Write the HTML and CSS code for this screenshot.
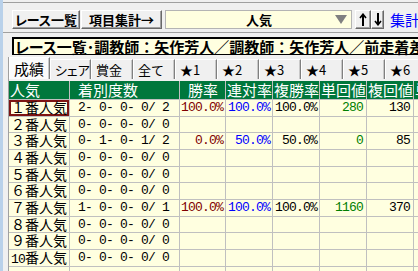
FILE: index.html
```html
<!DOCTYPE html>
<html lang="ja">
<head>
  <meta charset="UTF-8" />
  <title>人気別集計</title>
  <link rel="stylesheet" href="styles.css">
</head>
<body>
  <div class="frame">
    <div class="topstrip"></div>

    <div class="toolbar">
      <button class="btn btn-list"><span class="kana">レース一覧</span></button>
      <button class="btn btn-sum">項目集計→</button>
      <div class="combo">
        <span class="combo-text">人気</span>
        <svg class="caret" width="12" height="9" viewBox="0 0 12 9"><polygon points="0,0 12,0 6,9" fill="#808080"/></svg>
      </div>
      <button class="btn btn-arrow btn-up">
        <svg width="8" height="13" viewBox="0 0 8 13"><line x1="4" y1="1" x2="4" y2="13" stroke="#000" stroke-width="2"/><polyline points="1,5 4,1.2 7,5" fill="none" stroke="#000" stroke-width="1.6"/></svg>
      </button>
      <button class="btn btn-arrow btn-down">
        <svg width="8" height="13" viewBox="0 0 8 13"><line x1="4" y1="0" x2="4" y2="12" stroke="#000" stroke-width="2"/><polyline points="1,8 4,11.8 7,8" fill="none" stroke="#000" stroke-width="1.6"/></svg>
      </button>
      <span class="link">集計条件</span>
    </div>

    <div class="infobar">
      <div class="info"><span class="kana">レース一覧･</span>調教師：矢作芳人／調教師：矢作芳人／前走着差０．５秒以内</div>
    </div>

    <div class="panel">
      <div class="tabs">
        <div class="tab on">成績</div>
        <div class="tab narrow"><span class="kana">シェア</span></div>
        <div class="tab">賞金</div>
        <div class="tab">全て</div>
        <div class="tab">★1</div>
        <div class="tab">★2</div>
        <div class="tab">★3</div>
        <div class="tab">★4</div>
        <div class="tab">★5</div>
        <div class="tab">★6</div>
      </div>

      <div class="grid">
        <div class="h">人気</div>
        <div class="h pad">着別度数</div>
        <div class="h pad">勝率</div>
        <div class="h">連対率</div>
        <div class="h">複勝率</div>
        <div class="h">単回値</div>
        <div class="h">複回値</div>
        <div class="h">単</div>

        <div class="c name focus">１番人気</div>
        <div class="c rec"> 2- 0- 0- 0/ 2</div>
        <div class="c num win">100.0%</div>
        <div class="c num ren">100.0%</div>
        <div class="c num fuku">100.0%</div>
        <div class="c num tan">280</div>
        <div class="c num fk">130</div>
        <div class="c"></div>

        <div class="c name">２番人気</div>
        <div class="c rec"> 0- 0- 0- 0/ 0</div>
        <div class="c"></div><div class="c"></div><div class="c"></div><div class="c"></div><div class="c"></div><div class="c"></div>

        <div class="c name">３番人気</div>
        <div class="c rec"> 0- 1- 0- 1/ 2</div>
        <div class="c num win">0.0%</div>
        <div class="c num ren">50.0%</div>
        <div class="c num fuku">50.0%</div>
        <div class="c num tan">0</div>
        <div class="c num fk">85</div>
        <div class="c"></div>

        <div class="c name">４番人気</div>
        <div class="c rec"> 0- 0- 0- 0/ 0</div>
        <div class="c"></div><div class="c"></div><div class="c"></div><div class="c"></div><div class="c"></div><div class="c"></div>

        <div class="c name">５番人気</div>
        <div class="c rec"> 0- 0- 0- 0/ 0</div>
        <div class="c"></div><div class="c"></div><div class="c"></div><div class="c"></div><div class="c"></div><div class="c"></div>

        <div class="c name">６番人気</div>
        <div class="c rec"> 0- 0- 0- 0/ 0</div>
        <div class="c"></div><div class="c"></div><div class="c"></div><div class="c"></div><div class="c"></div><div class="c"></div>

        <div class="c name">７番人気</div>
        <div class="c rec"> 1- 0- 0- 0/ 1</div>
        <div class="c num win">100.0%</div>
        <div class="c num ren">100.0%</div>
        <div class="c num fuku">100.0%</div>
        <div class="c num tan">1160</div>
        <div class="c num fk">370</div>
        <div class="c"></div>

        <div class="c name">８番人気</div>
        <div class="c rec"> 0- 0- 0- 0/ 0</div>
        <div class="c"></div><div class="c"></div><div class="c"></div><div class="c"></div><div class="c"></div><div class="c"></div>

        <div class="c name">９番人気</div>
        <div class="c rec"> 0- 0- 0- 0/ 0</div>
        <div class="c"></div><div class="c"></div><div class="c"></div><div class="c"></div><div class="c"></div><div class="c"></div>

        <div class="c name"><span class="hw">10</span>番人気</div>
        <div class="c rec"> 0- 0- 0- 0/ 0</div>
        <div class="c"></div><div class="c"></div><div class="c"></div><div class="c"></div><div class="c"></div><div class="c"></div>

        <div class="c"></div><div class="c"></div><div class="c"></div><div class="c"></div>
        <div class="c"></div><div class="c"></div><div class="c"></div><div class="c"></div>
      </div>
    </div>
  </div>
</body>
</html>
```

FILE: styles.css
```css
/* Global */
body {
  margin: 0;
  background: #f0f0f0;
  color: #000;
  font-family: "Noto Sans CJK JP", sans-serif;
  overflow: hidden;
}
.frame {
  width: 415px;
  height: 271px;
  border-left: 3px solid #b9d1ea;
  overflow: hidden;
}
.kana {
  font-feature-settings: "palt";
}
/* Bottom edge of the row above */
.topstrip {
  height: 2px;
  border-bottom: 1px solid #a0a0a0;
}
/* Toolbar */
.toolbar {
  display: flex;
  align-items: flex-start;
  height: 22px;
  padding: 7px 0 0 9px;
  border-bottom: 1px solid #a0a0a0;
  white-space: nowrap;
}
.btn {
  flex: none;
  height: 19px;
  margin: 0;
  padding: 0;
  box-sizing: border-box;
  background: #f0f0f0;
  color: #000;
  font: bold 13px/17px "Noto Sans CJK JP", sans-serif;
  border: 1px solid;
  border-color: #fff #696969 #696969 #fff;
  box-shadow: inset -1px -1px 0 #a0a0a0;
  display: flex;
  align-items: center;
  justify-content: center;
}
.btn-list {
  width: 68px;
}
.btn-sum {
  width: 81px;
  margin-left: 1px;
}
.combo {
  flex: none;
  width: 187px;
  height: 19px;
  margin-left: 3px;
  box-sizing: border-box;
  border: 1px solid #b4b4b4;
  background: #ffffe0;
  display: flex;
  align-items: center;
  padding-left: 17px;
}
.combo-text {
  flex: 1;
  text-align: center;
  font: bold 13px/17px "Noto Sans CJK JP", sans-serif;
}
.caret {
  margin-right: 4px;
}
.btn-up {
  width: 16px;
  margin-left: 3px;
}
.btn-down {
  width: 13px;
}
.link {
  margin-left: 6px;
  color: #0000ff;
  font-size: 15px;
  line-height: 19px;
}
/* Caption box */
.infobar {
  height: 24px;
  padding: 4px 0 0 9px;
  box-sizing: border-box;
}
.info {
  width: 520px;
  height: 18px;
  box-sizing: border-box;
  border: solid #000;
  border-width: 2px 1px 1px 2px;
  background: #ffffe0;
  padding-left: 1px;
  font: bold 15px/15px "Noto Sans CJK JP", sans-serif;
  white-space: nowrap;
}
/* Tab panel */
.panel {
  margin-left: 5px;
  border-left: 1px solid #a0a0a0;
}
.tabs {
  display: flex;
  height: 22px;
  white-space: nowrap;
}
.tab {
  flex: none;
  width: 42px;
  height: 20px;
  margin-top: 2px;
  box-sizing: border-box;
  border-top: 1px solid #fff;
  border-left: 1px solid #fff;
  border-right: 1px solid #808080;
  box-shadow: inset -1px 0 0 #c8c8c8;
  padding-left: 4px;
  font-size: 13px;
  line-height: 19px;
}
.tab.on {
  width: 41px;
  height: 22px;
  margin-top: 0;
  background: #fbfbfb;
  font-size: 15px;
  line-height: 22px;
}
.tab.narrow {
  width: 41px;
}
/* Result grid */
.grid {
  margin-top: 2px;
  display: grid;
  grid-template-columns: 60px 109px 45px 46px 46px 46px 46px 60px;
  grid-template-rows: 18px;
  grid-auto-rows: 15.67px;
  gap: 1px;
  background: #c0c0c0;
  width: 480px;
}
.h {
  background: #00773c;
  color: #fff;
  font-size: 15px;
  line-height: 18px;
  padding-left: 1px;
  white-space: nowrap;
  overflow: hidden;
}
.h.pad {
  padding-left: 8px;
}
.c {
  background: #ffffe0;
  font-size: 14px;
  line-height: 15.67px;
  white-space: nowrap;
  overflow: hidden;
}
.name {
  padding-left: 2px;
}
.hw {
  font-family: "Liberation Mono", monospace;
  font-size: 13px;
  letter-spacing: -0.8px;
}
.focus {
  box-shadow: inset 0 0 0 2px #7d1414;
}
.rec,
.num {
  font-family: "Liberation Mono", monospace;
  font-size: 13px;
  letter-spacing: -0.8px;
}
.rec {
  white-space: pre;
  padding-left: 1px;
}
.num {
  text-align: right;
  padding-right: 2px;
}
.win { color: #800000; }
.ren { color: #0000ff; }
.fuku { color: #000; }
.tan { color: #008000; padding-right: 3px; }
.fk { color: #000; padding-right: 3px; }
```
